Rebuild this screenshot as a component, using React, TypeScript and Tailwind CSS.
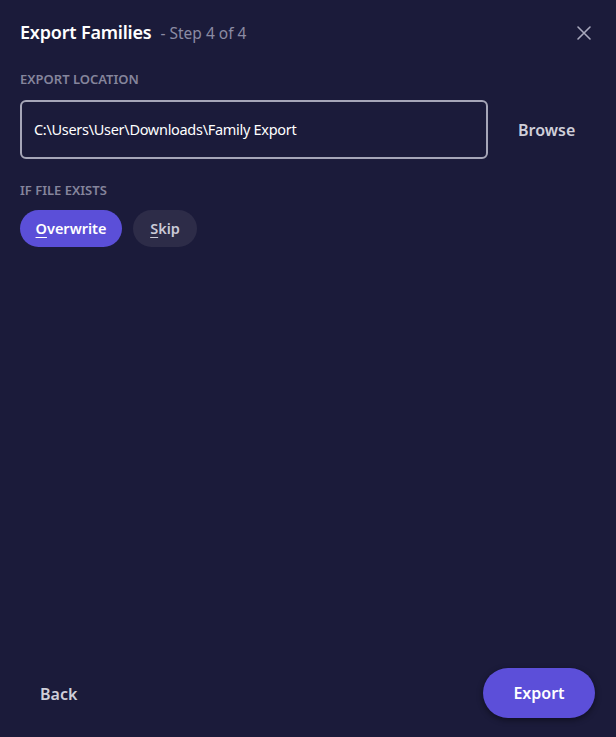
import React from 'react';

const App: React.FC = () => {
  return (
    <div
      className="w-[616px] h-[737px] bg-[#1b1b3a] flex flex-col overflow-hidden"
      style={{ fontFamily: '"Noto Sans", "Open Sans", sans-serif' }}
    >
      {/* Header */}
      <div className="flex items-center justify-between pl-5 pr-[24px] h-[65px]">
        <div className="flex items-baseline">
          <span className="text-[18px] font-semibold text-white tracking-[-0.2px]">Export Families</span>
          <span className="ml-[9px] text-[15.5px] text-[#8b8ba3]">- Step 4 of 4</span>
        </div>
        <button className="text-[#a9a9bd]">
          <svg width="16" height="16" viewBox="0 0 16 16" fill="none" stroke="currentColor" strokeWidth="1.6" strokeLinecap="round">
            <path d="M2 2L14 14M14 2L2 14" />
          </svg>
        </button>
      </div>

      {/* Body */}
      <div className="flex-1 px-5">
        <div className="text-[13px] font-semibold text-[#85859c] mt-[8px] leading-none">EXPORT LOCATION</div>
        <div className="flex items-center mt-[14px]">
          <div className="w-[468px] h-[59px] border-2 border-[#a6a6b8] rounded-[6px] flex items-center px-[12px]">
            <span className="text-[14.5px] text-white tracking-[-0.3px]">C:\Users\User\Downloads\Family Export</span>
          </div>
          <button className="ml-[30px] text-[16px] font-semibold text-[#cfcfd9]">Browse</button>
        </div>

        <div className="text-[13px] font-semibold text-[#85859c] mt-[25px] leading-none">IF FILE EXISTS</div>
        <div className="flex gap-[11px] mt-[13px]">
          <button className="h-[37px] w-[102px] rounded-full bg-[#5b4fd8] text-[14.5px] font-semibold text-white">
            <span className="underline underline-offset-[3px] decoration-1">O</span>verwrite
          </button>
          <button className="h-[37px] w-[64px] rounded-full bg-[#2d2c48] text-[14.5px] font-semibold text-[#c9c9d6]">
            <span className="underline underline-offset-[3px] decoration-1">S</span>kip
          </button>
        </div>
      </div>

      {/* Footer */}
      <div className="flex items-center justify-between pl-10 pr-[21px] pb-[19px]">
        <button className="text-[16px] font-semibold text-[#cfcfd9] mt-[2px]">Back</button>
        <button className="h-[50px] w-[112px] rounded-full bg-[#5c4fd9] text-[16px] font-semibold text-white shadow-[0_2px_6px_rgba(0,0,0,0.45)]">
          Export
        </button>
      </div>
    </div>
  );
};

export default App;
